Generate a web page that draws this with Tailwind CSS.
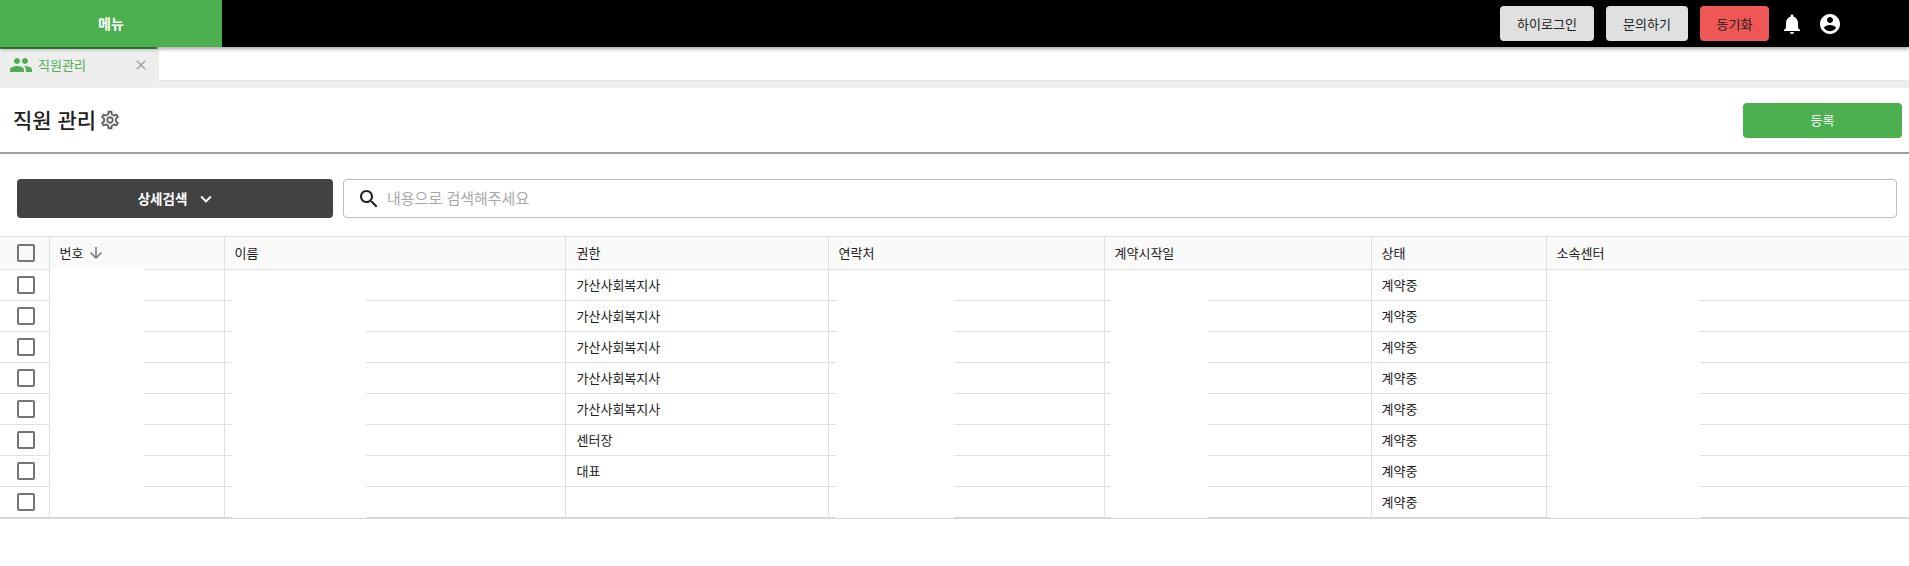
<!DOCTYPE html>
<html lang="ko">
<head>
  <meta charset="UTF-8">
  <title>직원 관리</title>
  <script src="https://cdn.jsdelivr.net/npm/@tailwindcss/browser@4"></script>
</head>
<body class="h-[566px] overflow-hidden bg-white text-[13px] text-[#212121] font-['Noto_Sans_CJK_KR','Noto_Sans',sans-serif]">
  <!-- top bar -->
  <header class="relative z-10 flex h-[47px] items-center bg-black shadow-[0_2px_4px_rgba(0,0,0,0.35)]">
    <div class="flex h-full w-[222px] items-center justify-center bg-[#4caf50] text-[14px] font-bold text-white">메뉴</div>
    <div class="ml-auto flex items-center pr-[67px]">
      <button class="h-[35px] w-[94px] rounded bg-[#e0e0e0]">하이로그인</button>
      <button class="ml-3 h-[35px] w-[82px] rounded bg-[#e0e0e0]">문의하기</button>
      <button class="ml-3 h-[35px] w-[69px] rounded bg-[#ef5757]">동기화</button>
      <svg class="ml-[11px] h-[24px] w-[24px] fill-white" viewBox="0 0 24 24"><path d="M12 22c1.1 0 2-.9 2-2h-4c0 1.1.89 2 2 2zm6-6v-5c0-3.07-1.64-5.64-4.5-6.32V4c0-.83-.67-1.5-1.5-1.5s-1.5.67-1.5 1.5v.68C7.63 5.36 6 7.92 6 11v5l-2 2v1h16v-1l-2-2z"/></svg>
      <svg class="ml-[14px] h-[24px] w-[24px] fill-white" viewBox="0 0 24 24"><path d="M12 2C6.48 2 2 6.48 2 12s4.48 10 10 10 10-4.48 10-10S17.52 2 12 2zm0 3c1.66 0 3 1.34 3 3s-1.34 3-3 3-3-1.34-3-3 1.34-3 3-3zm0 14.2c-2.5 0-4.71-1.28-6-3.22.03-1.99 4-3.08 6-3.08 1.99 0 5.97 1.09 6 3.08-1.29 1.94-3.5 3.22-6 3.22z"/></svg>
    </div>
  </header>

  <!-- tabs -->
  <div class="flex h-[41px] bg-[#eeeeee]">
    <div class="flex h-full w-[157px] items-center border-t-2 border-[#388e3c] pl-[9px] pb-[7px] text-[#4caf50]">
      <svg class="h-[24px] w-[24px] fill-[#4caf50]" viewBox="0 0 24 24"><path d="M16 11c1.66 0 2.99-1.34 2.99-3S17.66 5 16 5c-1.66 0-3 1.34-3 3s1.34 3 3 3zm-8 0c1.66 0 2.99-1.34 2.99-3S9.66 5 8 5C6.34 5 5 6.34 5 8s1.34 3 3 3zm0 2c-2.33 0-7 1.17-7 3.5V19h14v-2.5c0-2.33-4.67-3.5-7-3.5zm8 0c-.29 0-.62.02-.97.05 1.16.84 1.97 1.97 1.97 3.45V19h6v-2.5c0-2.33-4.67-3.5-7-3.5z"/></svg>
      <span class="ml-[5px]">직원관리</span>
      <svg class="ml-auto mr-[8px] h-[16px] w-[16px] fill-[#9e9e9e]" viewBox="0 0 24 24"><path d="M19 6.41 17.59 5 12 10.59 6.41 5 5 6.41 10.59 12 5 17.59 6.41 19 12 13.41 17.59 19 19 17.59 13.41 12z"/></svg>
    </div>
    <div class="ml-[2px] h-[34px] flex-1 border-b border-[#e5e5e5] bg-white"></div>
  </div>

  <!-- page title -->
  <div class="flex h-[66px] items-center border-b-2 border-[#9e9e9e] pl-[13px] pr-[7px]">
    <h1 class="text-[21px] font-medium">직원 관리</h1>
    <svg class="ml-[3px] h-[22px] w-[22px] fill-[#616161]" viewBox="0 0 24 24"><path d="M19.43 12.98c.04-.32.07-.64.07-.98 0-.34-.03-.66-.07-.98l2.11-1.65c.19-.15.24-.42.12-.64l-2-3.46c-.09-.16-.26-.25-.44-.25-.06 0-.12.01-.17.03l-2.49 1c-.52-.4-1.08-.73-1.69-.98l-.38-2.65C14.46 2.18 14.25 2 14 2h-4c-.25 0-.46.18-.49.42l-.38 2.65c-.61.25-1.17.59-1.69.98l-2.49-1c-.06-.02-.12-.03-.18-.03-.17 0-.34.09-.43.25l-2 3.46c-.13.22-.07.49.12.64l2.11 1.65c-.04.32-.07.65-.07.98 0 .33.03.66.07.98l-2.11 1.65c-.19.15-.24.42-.12.64l2 3.46c.09.16.26.25.44.25.06 0 .12-.01.17-.03l2.49-1c.52.4 1.08.73 1.69.98l.38 2.65c.03.24.24.42.49.42h4c.25 0 .46-.18.49-.42l.38-2.65c.61-.25 1.17-.59 1.69-.98l2.49 1c.06.02.12.03.18.03.17 0 .34-.09.43-.25l2-3.46c.12-.22.07-.49-.12-.64l-2.11-1.65zm-1.98-1.71c.04.31.05.52.05.73 0 .21-.02.43-.05.73l-.14 1.13.89.7 1.08.84-.7 1.21-1.27-.51-1.04-.42-.9.68c-.43.32-.84.56-1.25.73l-1.06.43-.16 1.13-.2 1.35h-1.4l-.19-1.35-.16-1.13-1.06-.43c-.43-.18-.83-.41-1.23-.71l-.91-.7-1.06.43-1.27.51-.7-1.21 1.08-.84.89-.7-.14-1.13c-.03-.31-.05-.54-.05-.74s.02-.43.05-.73l.14-1.13-.89-.7-1.08-.84.7-1.21 1.27.51 1.04.42.9-.68c.43-.32.84-.56 1.25-.73l1.06-.43.16-1.13.2-1.35h1.39l.19 1.35.16 1.13 1.06.43c.43.18.83.41 1.23.71l.91.7 1.06-.43 1.27-.51.7 1.21-1.07.85-.89.7.14 1.13zM12 8c-2.21 0-4 1.79-4 4s1.79 4 4 4 4-1.79 4-4-1.79-4-4-4zm0 6c-1.1 0-2-.9-2-2s.9-2 2-2 2 .9 2 2-.9 2-2 2z"/></svg>
    <button class="ml-auto h-[35px] w-[159px] rounded bg-[#4caf50] text-white">등록</button>
  </div>

  <!-- search -->
  <div class="flex gap-[10px] pl-[17px] pr-[12px] pt-[25px]">
    <button class="flex h-[39px] w-[316px] items-center justify-center gap-[8px] rounded bg-[#424242] pl-[5px] text-[13.5px] font-bold text-white">
      상세검색
      <svg class="h-[22px] w-[22px] fill-white" viewBox="0 0 24 24"><path d="M16.59 8.59 12 13.17 7.41 8.59 6 10l6 6 6-6z"/></svg>
    </button>
    <div class="flex h-[39px] flex-1 items-center rounded border border-[#bdbdbd] pl-[13px]">
      <svg class="h-[24px] w-[24px] fill-[#212121]" viewBox="0 0 24 24"><path d="M15.5 14h-.79l-.28-.27C15.41 12.59 16 11.11 16 9.5 16 5.91 13.09 3 9.5 3S3 5.91 3 9.5 5.91 16 9.5 16c1.61 0 3.09-.59 4.23-1.57l.27.28v.79l5 4.99L20.49 19l-4.99-5zm-6 0C7.01 14 5 11.99 5 9.5S7.01 5 9.5 5 14 7.01 14 9.5 11.99 14 9.5 14z"/></svg>
      <span class="ml-[6px] text-[15px] text-[#a8a8a8]">내용으로 검색해주세요</span>
    </div>
  </div>

  <!-- table -->
  <div class="relative mt-[18px]">
    <table class="w-full table-fixed border-collapse border-y border-t-[#e0e0e0] border-b-2 border-b-[#d8d8d8]">
      <colgroup>
        <col class="w-[49px]"><col class="w-[175px]"><col class="w-[341px]"><col class="w-[263px]"><col class="w-[276px]"><col class="w-[267px]"><col class="w-[175px]"><col>
      </colgroup>
      <thead class="bg-[#fafafa] text-left font-medium">
        <tr class="h-[33px] border-b border-[#e0e0e0]">
          <th class="border-r border-[#e0e0e0]"><svg class="ml-[14px] h-[24px] w-[24px] fill-[#757575]" viewBox="0 0 24 24"><path d="M19 5v14H5V5h14m0-2H5c-1.1 0-2 .9-2 2v14c0 1.1.9 2 2 2h14c1.1 0 2-.9 2-2V5c0-1.1-.9-2-2-2z"/></svg></th>
          <th class="border-r border-[#e0e0e0] pl-[10px] font-normal">
            <span class="flex items-center gap-[4px]">번호<svg class="h-[18px] w-[18px] fill-[#757575]" viewBox="0 0 24 24"><path d="m20 12-1.41-1.41L13 16.17V4h-2v12.17l-5.58-5.59L4 12l8 8 8-8z"/></svg></span>
          </th>
          <th class="border-r border-[#e0e0e0] pl-[10px] font-normal">이름</th>
          <th class="border-r border-[#e0e0e0] pl-[11px] font-normal">권한</th>
          <th class="border-r border-[#e0e0e0] pl-[10px] font-normal">연락처</th>
          <th class="border-r border-[#e0e0e0] pl-[10px] font-normal">계약시작일</th>
          <th class="border-r border-[#e0e0e0] pl-[10px] font-normal">상태</th>
          <th class="pl-[10px] font-normal">소속센터</th>
        </tr>
      </thead>
      <tbody>
        <tr class="h-[31px] border-b border-[#e0e0e0]"><td class="border-r border-[#e0e0e0]"><svg class="ml-[14px] h-[24px] w-[24px] fill-[#757575]" viewBox="0 0 24 24"><path d="M19 5v14H5V5h14m0-2H5c-1.1 0-2 .9-2 2v14c0 1.1.9 2 2 2h14c1.1 0 2-.9 2-2V5c0-1.1-.9-2-2-2z"/></svg></td><td class="border-r border-[#e0e0e0]"></td><td class="border-r border-[#e0e0e0]"></td><td class="border-r border-[#e0e0e0] pl-[11px]">가산사회복지사</td><td class="border-r border-[#e0e0e0]"></td><td class="border-r border-[#e0e0e0]"></td><td class="border-r border-[#e0e0e0] pl-[10px]">계약중</td><td></td></tr>
        <tr class="h-[31px] border-b border-[#e0e0e0]"><td class="border-r border-[#e0e0e0]"><svg class="ml-[14px] h-[24px] w-[24px] fill-[#757575]" viewBox="0 0 24 24"><path d="M19 5v14H5V5h14m0-2H5c-1.1 0-2 .9-2 2v14c0 1.1.9 2 2 2h14c1.1 0 2-.9 2-2V5c0-1.1-.9-2-2-2z"/></svg></td><td class="border-r border-[#e0e0e0]"></td><td class="border-r border-[#e0e0e0]"></td><td class="border-r border-[#e0e0e0] pl-[11px]">가산사회복지사</td><td class="border-r border-[#e0e0e0]"></td><td class="border-r border-[#e0e0e0]"></td><td class="border-r border-[#e0e0e0] pl-[10px]">계약중</td><td></td></tr>
        <tr class="h-[31px] border-b border-[#e0e0e0]"><td class="border-r border-[#e0e0e0]"><svg class="ml-[14px] h-[24px] w-[24px] fill-[#757575]" viewBox="0 0 24 24"><path d="M19 5v14H5V5h14m0-2H5c-1.1 0-2 .9-2 2v14c0 1.1.9 2 2 2h14c1.1 0 2-.9 2-2V5c0-1.1-.9-2-2-2z"/></svg></td><td class="border-r border-[#e0e0e0]"></td><td class="border-r border-[#e0e0e0]"></td><td class="border-r border-[#e0e0e0] pl-[11px]">가산사회복지사</td><td class="border-r border-[#e0e0e0]"></td><td class="border-r border-[#e0e0e0]"></td><td class="border-r border-[#e0e0e0] pl-[10px]">계약중</td><td></td></tr>
        <tr class="h-[31px] border-b border-[#e0e0e0]"><td class="border-r border-[#e0e0e0]"><svg class="ml-[14px] h-[24px] w-[24px] fill-[#757575]" viewBox="0 0 24 24"><path d="M19 5v14H5V5h14m0-2H5c-1.1 0-2 .9-2 2v14c0 1.1.9 2 2 2h14c1.1 0 2-.9 2-2V5c0-1.1-.9-2-2-2z"/></svg></td><td class="border-r border-[#e0e0e0]"></td><td class="border-r border-[#e0e0e0]"></td><td class="border-r border-[#e0e0e0] pl-[11px]">가산사회복지사</td><td class="border-r border-[#e0e0e0]"></td><td class="border-r border-[#e0e0e0]"></td><td class="border-r border-[#e0e0e0] pl-[10px]">계약중</td><td></td></tr>
        <tr class="h-[31px] border-b border-[#e0e0e0]"><td class="border-r border-[#e0e0e0]"><svg class="ml-[14px] h-[24px] w-[24px] fill-[#757575]" viewBox="0 0 24 24"><path d="M19 5v14H5V5h14m0-2H5c-1.1 0-2 .9-2 2v14c0 1.1.9 2 2 2h14c1.1 0 2-.9 2-2V5c0-1.1-.9-2-2-2z"/></svg></td><td class="border-r border-[#e0e0e0]"></td><td class="border-r border-[#e0e0e0]"></td><td class="border-r border-[#e0e0e0] pl-[11px]">가산사회복지사</td><td class="border-r border-[#e0e0e0]"></td><td class="border-r border-[#e0e0e0]"></td><td class="border-r border-[#e0e0e0] pl-[10px]">계약중</td><td></td></tr>
        <tr class="h-[31px] border-b border-[#e0e0e0]"><td class="border-r border-[#e0e0e0]"><svg class="ml-[14px] h-[24px] w-[24px] fill-[#757575]" viewBox="0 0 24 24"><path d="M19 5v14H5V5h14m0-2H5c-1.1 0-2 .9-2 2v14c0 1.1.9 2 2 2h14c1.1 0 2-.9 2-2V5c0-1.1-.9-2-2-2z"/></svg></td><td class="border-r border-[#e0e0e0]"></td><td class="border-r border-[#e0e0e0]"></td><td class="border-r border-[#e0e0e0] pl-[11px]">센터장</td><td class="border-r border-[#e0e0e0]"></td><td class="border-r border-[#e0e0e0]"></td><td class="border-r border-[#e0e0e0] pl-[10px]">계약중</td><td></td></tr>
        <tr class="h-[31px] border-b border-[#e0e0e0]"><td class="border-r border-[#e0e0e0]"><svg class="ml-[14px] h-[24px] w-[24px] fill-[#757575]" viewBox="0 0 24 24"><path d="M19 5v14H5V5h14m0-2H5c-1.1 0-2 .9-2 2v14c0 1.1.9 2 2 2h14c1.1 0 2-.9 2-2V5c0-1.1-.9-2-2-2z"/></svg></td><td class="border-r border-[#e0e0e0]"></td><td class="border-r border-[#e0e0e0]"></td><td class="border-r border-[#e0e0e0] pl-[11px]">대표</td><td class="border-r border-[#e0e0e0]"></td><td class="border-r border-[#e0e0e0]"></td><td class="border-r border-[#e0e0e0] pl-[10px]">계약중</td><td></td></tr>
        <tr class="h-[31px]"><td class="border-r border-[#e0e0e0]"><svg class="ml-[14px] h-[24px] w-[24px] fill-[#757575]" viewBox="0 0 24 24"><path d="M19 5v14H5V5h14m0-2H5c-1.1 0-2 .9-2 2v14c0 1.1.9 2 2 2h14c1.1 0 2-.9 2-2V5c0-1.1-.9-2-2-2z"/></svg></td><td class="border-r border-[#e0e0e0]"></td><td class="border-r border-[#e0e0e0]"></td><td class="border-r border-[#e0e0e0]"></td><td class="border-r border-[#e0e0e0]"></td><td class="border-r border-[#e0e0e0]"></td><td class="border-r border-[#e0e0e0] pl-[10px]">계약중</td><td></td></tr>
      </tbody>
    </table>
    <!-- blanked-out cell values sit over the row lines -->
    <div class="absolute left-[50px] top-[31px] h-[250px] w-[94px] bg-white"></div>
    <div class="absolute left-[232px] top-[34px] h-[248px] w-[134px] bg-white"></div>
    <div class="absolute left-[836px] top-[34px] h-[248px] w-[118px] bg-white"></div>
    <div class="absolute left-[1111px] top-[34px] h-[248px] w-[97px] bg-white"></div>
    <div class="absolute left-[1550px] top-[34px] h-[248px] w-[150px] bg-white"></div>
  </div>
</body>
</html>
